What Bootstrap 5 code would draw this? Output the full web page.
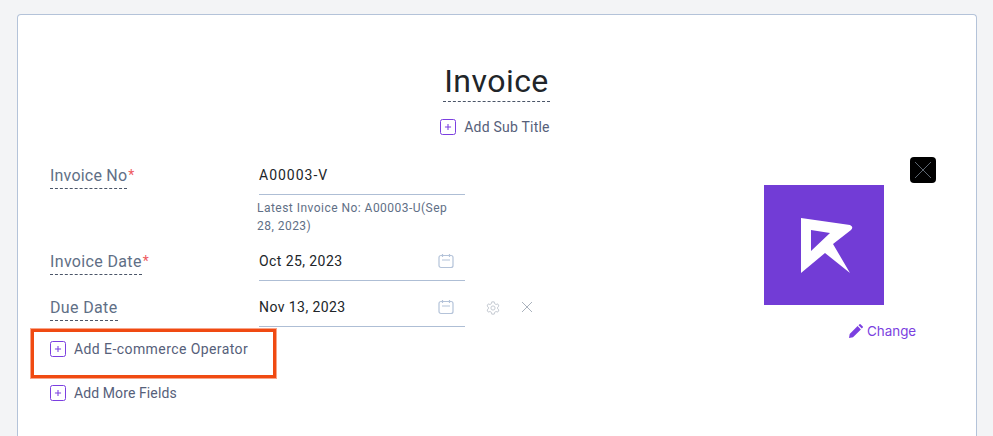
<!DOCTYPE html>
<html lang="en">
<head>
<meta charset="utf-8">
<title>Invoice</title>
<link href="https://cdn.jsdelivr.net/npm/bootstrap@5.3.0/dist/css/bootstrap.min.css" rel="stylesheet">
<style>
html,body{height:436px;overflow:hidden}
body{background:#f3f4f6;font-family:Roboto,"Liberation Sans",sans-serif;padding:14px 16px 0 17px}
.sheet{height:422px;background:#fff;border:1px solid #b4c3d9;border-bottom:0;border-radius:4px 4px 0 0;padding:46px 33px 0 32px;position:relative}
.doc-title{font-size:32px;line-height:40px;color:#212529;font-weight:400;border-bottom:1px dashed #4a5568;width:107px;text-align:center;margin:0 auto;letter-spacing:.45px}
.sub-add{height:36px;margin-top:7px;margin-bottom:4px;padding-right:3px}
.add-link{color:#56607a;font-size:14px;line-height:20px}
.ls-sub{letter-spacing:.22px}
.ls-ecom{letter-spacing:.42px}
.ls-more{letter-spacing:.1px}
.plus-box{width:16px;height:16px;flex:none;border:1.5px solid #7b3fe0;border-radius:2.5px;margin-right:8px}
.left-col{width:483px}
.field{display:flex}
.field-label{width:209px;flex:none;padding-top:15px;font-size:16px;line-height:23px}
.lbl{display:inline-block;color:#5f6f86;border-bottom:1px dashed #4a5568;letter-spacing:.2px;padding-bottom:1px}
.lbl-wide{letter-spacing:.35px}
.req{color:#ee5a60;font-size:14px;vertical-align:1px;margin-left:1px}
.field-input{width:206px;flex:none;border-bottom:1px solid #aebed5;height:46px;font-size:14px;color:#212529;letter-spacing:.42px;padding-top:16px;line-height:20px}
.ls-code{letter-spacing:1px}
.hint{margin:4px 0 0 -2px;width:208px;font-size:12px;line-height:18px;color:#5f6f86;letter-spacing:.47px}
.cal-icon{margin-right:11px;margin-top:2px;flex:none}
.tool{margin-left:21px;margin-top:20px}
.logo-col{width:172px;margin-left:231px;margin-top:8px}
.x-btn{width:26px;height:26px;background:#000;border-radius:4px;margin-left:146px}
.logo-box{width:120px;height:120px;background:#723cd6;margin-top:2px}
.change{margin-left:85px;margin-top:16px;color:#7b3fe0;font-family:Inter,sans-serif;font-size:13.4px;line-height:20px}
.add-gap-a{margin-top:12px}
.add-gap-b{margin-top:24px}
.mark-box{position:absolute;left:13px;top:314px;width:245px;height:49px;border:3px solid #f04a12;outline:1px solid #f8a58a}
</style>
</head>
<body>
<div class="sheet">
  <h1 class="doc-title">Invoice</h1>
  <div class="sub-add d-flex justify-content-center align-items-center add-link">
    <svg class="plus-box" viewBox="0 0 16 16"><path d="M4.5 8h7M8 4.5v7" stroke="#7b3fe0" stroke-width="1.2" fill="none"/></svg>
    <span class="ls-sub">Add Sub Title</span>
  </div>
  <div class="d-flex">
    <div class="left-col">
      <div class="field">
        <div class="field-label"><span class="lbl">Invoice No</span><span class="req">*</span></div>
        <div>
          <div class="field-input ls-code">A00003-V</div>
          <div class="hint">Latest Invoice No: A00003-U(Sep 28, 2023)</div>
        </div>
      </div>
      <div class="field">
        <div class="field-label"><span class="lbl lbl-wide">Invoice Date</span><span class="req">*</span></div>
        <div class="field-input d-flex justify-content-between">
          <span>Oct 25, 2023</span>
          <svg class="cal-icon" width="16" height="16" viewBox="0 0 16 16" fill="none" stroke="#b4c3d9" stroke-width="1.2"><rect x="1" y="2.5" width="14" height="12" rx="2"/><path d="M4.5 1v3M11.5 1v3M4 7h8"/></svg>
        </div>
      </div>
      <div class="field">
        <div class="field-label"><span class="lbl lbl-wide">Due Date</span></div>
        <div class="field-input d-flex justify-content-between">
          <span>Nov 13, 2023</span>
          <svg class="cal-icon" width="16" height="16" viewBox="0 0 16 16" fill="none" stroke="#b4c3d9" stroke-width="1.2"><rect x="1" y="2.5" width="14" height="12" rx="2"/><path d="M4.5 1v3M11.5 1v3M4 7h8"/></svg>
        </div>
        <svg class="tool" width="14" height="14" viewBox="0 0 16 16" fill="none" stroke="#c3c8d0" stroke-width="1.1"><circle cx="8" cy="8" r="2.4"/><path d="M6.6 1h2.8l.4 2 1.7 1 1.9-.7 1.4 2.4-1.5 1.3v2l1.5 1.3-1.4 2.4-1.9-.7-1.7 1-.4 2H6.6l-.4-2-1.7-1-1.9.7-1.4-2.4L2.7 9V7L1.2 5.7l1.4-2.4 1.9.7 1.7-1z"/></svg>
        <svg class="tool" width="12" height="12" viewBox="0 0 12 12" fill="none" stroke="#aab2bd" stroke-width="1"><path d="M1 1l10 10M11 1L1 11"/></svg>
      </div>
      <div class="add-link d-flex align-items-center add-gap-a">
        <svg class="plus-box" viewBox="0 0 16 16"><path d="M4.5 8h7M8 4.5v7" stroke="#7b3fe0" stroke-width="1.2" fill="none"/></svg>
        <span class="ls-ecom">Add E-commerce Operator</span>
      </div>
      <div class="add-link d-flex align-items-center add-gap-b">
        <svg class="plus-box" viewBox="0 0 16 16"><path d="M4.5 8h7M8 4.5v7" stroke="#7b3fe0" stroke-width="1.2" fill="none"/></svg>
        <span class="ls-more">Add More Fields</span>
      </div>
    </div>
    <div class="logo-col">
      <div class="x-btn d-flex align-items-center justify-content-center">
        <svg width="18" height="18" viewBox="0 0 18 18" fill="none" stroke="#5d6670" stroke-width="1"><path d="M1 1l16 16M17 1L1 17"/></svg>
      </div>
      <div class="logo-box d-flex align-items-center justify-content-center">
        <svg width="120" height="120" viewBox="0 0 120 120"><path fill="#fff" fill-rule="evenodd" d="M37 33L86 40Q90 42 87 45L69 59L86 88L61 68L37 88ZM47 45V66L66 48Z"/></svg>
      </div>
      <div class="change d-flex align-items-center">
        <svg class="me-1" width="14" height="14" viewBox="0 0 14 14"><path fill="#7b3fe0" d="M0 14l.7-4L8.6 2.1l3.3 3.3L4 13.3zM9.5 1.2l1-1q.5-.4 1 0l2.3 2.3q.4.5 0 1l-1 1z"/></svg>
        <span>Change</span>
      </div>
    </div>
  </div>
  <div class="mark-box"></div>
</div>
<script src="https://cdn.jsdelivr.net/npm/bootstrap@5.3.0/dist/js/bootstrap.bundle.min.js"></script>
</body>
</html>
